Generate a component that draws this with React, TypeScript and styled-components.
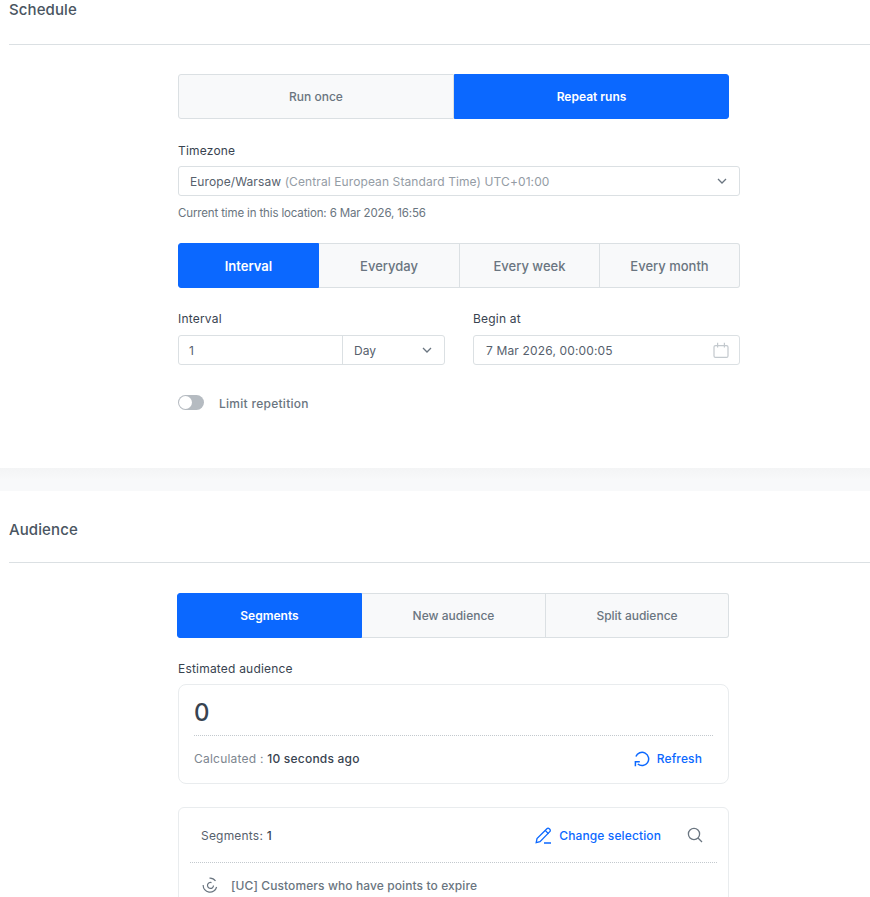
import styled, { createGlobalStyle } from 'styled-components';

const GlobalStyle = createGlobalStyle`
  html, body {
    margin: 0;
    background: #fff;
    overflow: hidden;
  }
  * {
    box-sizing: border-box;
  }
  body {
    font-family: Inter, "Liberation Sans", sans-serif;
    color: #384350;
  }
`;

const Page = styled.div`
  width: 870px;
  height: 897px;
  overflow: hidden;
`;

const Section = styled.section<{ $height: number }>`
  height: ${({ $height }) => $height}px;
  padding-left: 9px;
`;

const SectionTitle = styled.h2<{ $height: number }>`
  margin: 0;
  height: ${({ $height }) => $height}px;
  border-bottom: 1px solid #dbe0e3;
  font-size: 15px;
  font-weight: 500;
  color: #4a5561;
  letter-spacing: 0.1px;
`;

const TitleText = styled.span<{ $top: number }>`
  display: block;
  padding-top: ${({ $top }) => $top}px;
  line-height: 20px;
`;

const Band = styled.div`
  height: 23px;
  background: linear-gradient(#f3f4f5, #f8f9fa 50%);
`;

const Body = styled.div<{ $top: number; $left: number }>`
  padding-top: ${({ $top }) => $top}px;
  padding-left: ${({ $left }) => $left}px;
`;

const Tabs = styled.div<{ $columns: string; $top?: number }>`
  display: grid;
  grid-template-columns: ${({ $columns }) => $columns};
  height: 45px;
  margin-top: ${({ $top }) => $top ?? 0}px;
`;

const Tab = styled.button<{ $active?: boolean }>`
  min-width: 0;
  padding: 0;
  font: ${({ $active }) => ($active ? 600 : 500)} 12px Inter, "Liberation Sans", sans-serif;
  cursor: pointer;
  border: 1px solid ${({ $active }) => ($active ? '#0b68ff' : '#dbe0e3')};
  border-left-width: ${({ $active }) => ($active ? 1 : 0)}px;
  background: ${({ $active }) => ($active ? '#0b68ff' : '#f8f9fa')};
  color: ${({ $active }) => ($active ? '#fff' : '#6a7580')};

  &:first-child {
    border-left-width: 1px;
    border-radius: 3px 0 0 3px;
  }
  &:last-child {
    border-radius: 0 3px 3px 0;
  }
`;

const LargeTab = styled(Tab)`
  font-size: 13px;
`;

const Label = styled.div<{ $top: number }>`
  margin-top: ${({ $top }) => $top}px;
  height: 16px;
  font-size: 12px;
  line-height: 16px;
  color: #384350;
  letter-spacing: 0.2px;
`;

const Field = styled.div`
  display: flex;
  align-items: center;
  height: 30px;
  border: 1px solid #dbe0e3;
  border-radius: 3px;
  font-size: 12px;
  color: #57616d;
  background: #fff;
`;

const TimezoneField = styled(Field)`
  width: 562px;
  margin-top: 7px;
  padding: 0 12px 0 11px;
  justify-content: space-between;
  letter-spacing: 0.1px;
`;

const Muted = styled.span`
  color: #949ca5;
`;

const Hint = styled.div`
  margin-top: 9px;
  height: 16px;
  font-size: 11.5px;
  line-height: 16px;
  color: #6a7580;
  letter-spacing: -0.14px;
`;

const FieldRow = styled.div`
  display: grid;
  grid-template-columns: 267px 267px;
  column-gap: 28px;
  margin-top: 23px;
`;

const NumberPart = styled.div`
  flex: 1;
  height: 100%;
  display: flex;
  align-items: center;
  padding-left: 10px;
  border-right: 1px solid #dbe0e3;
`;

const UnitPart = styled.div`
  width: 101px;
  display: flex;
  align-items: center;
  justify-content: space-between;
  padding: 0 12px 0 11px;
`;

const FieldSlot = styled.div`
  margin-top: 8px;
`;

const DateField = styled(Field)`
  justify-content: space-between;
  padding: 0 10px 0 12px;
  letter-spacing: 0.15px;
`;

const SwitchRow = styled.div`
  display: flex;
  align-items: center;
  gap: 15px;
  margin-top: 30px;
  font-size: 12px;
  font-weight: 500;
  color: #6a7580;
  letter-spacing: 0.28px;
`;

const SwitchTrack = styled.div`
  position: relative;
  width: 26px;
  height: 15px;
  margin-bottom: 2px;
  border-radius: 8px;
  background: #b5bbc1;
`;

const SwitchKnob = styled.div`
  position: absolute;
  left: 1px;
  top: 1px;
  width: 13px;
  height: 13px;
  border-radius: 50%;
  background: #fff;
`;

const Card = styled.div`
  width: 551px;
  border: 1px solid #e9ecee;
  border-radius: 8px;
  background: #fff;
`;

const AudienceCard = styled(Card)`
  height: 100px;
  margin-top: 7px;
  padding: 0 15px;
`;

const BigNumber = styled.div`
  height: 51px;
  padding-top: 13px;
  border-bottom: 1px dotted #c3c9ce;
  font-size: 24px;
  font-weight: 500;
  line-height: 29px;
  color: #384350;
`;

const CalcRow = styled.div`
  display: flex;
  align-items: center;
  justify-content: space-between;
  height: 45px;
  padding-right: 11px;
  font-size: 12px;
  color: #7d8690;
  letter-spacing: 0.22px;
`;

const Strong = styled.span`
  color: #384350;
  font-weight: 500;
`;

const LinkAction = styled.span`
  display: inline-flex;
  align-items: center;
  gap: 7px;
  font-size: 12px;
  font-weight: 500;
  color: #0b68ff;
  letter-spacing: 0.12px;
`;

const SegmentsCard = styled(Card)`
  height: 130px;
  margin-top: 23px;
  padding: 0 11px;
  border-radius: 6px;
`;

const SegmentsHeader = styled.div`
  display: flex;
  align-items: center;
  justify-content: space-between;
  height: 55px;
  padding: 0 14px 0 11px;
  border-bottom: 1px dotted #c3c9ce;
  font-size: 12px;
  color: #57616d;
  letter-spacing: 0.2px;
`;

const SegmentActions = styled.div`
  display: flex;
  align-items: center;
  gap: 26px;
`;

const SegmentRow = styled.div`
  display: flex;
  align-items: center;
  gap: 13px;
  height: 44px;
  padding-left: 12px;
  font-size: 12px;
  font-weight: 500;
  color: #6a7580;
  letter-spacing: 0.1px;
`;

const Chevron = () => (
  <svg width="10" height="6" viewBox="0 0 10 6" fill="none" stroke="#6a7580" strokeWidth="1.3">
    <path d="M1 1l4 4 4-4" />
  </svg>
);

const CalendarIcon = () => (
  <svg width="16" height="16" viewBox="0 0 16 16" fill="none" stroke="#c3c9ce" strokeWidth="1.2">
    <rect x="1" y="3.6" width="14" height="11.8" rx="1.5" />
    <path d="M4.6 0.8v4.6M11.4 0.8v4.6" />
  </svg>
);

const RefreshIcon = () => (
  <svg width="16" height="16" viewBox="0 0 16 16" fill="none" stroke="#0b68ff" strokeWidth="1.5">
    <path d="M1.9 5.6A6.6 6.6 0 1 1 3.8 13" />
    <path d="M1.4 15.2v-4.4h4.4" />
  </svg>
);

const PencilIcon = () => (
  <svg width="17" height="17" viewBox="0 0 17 17" fill="none" stroke="#0b68ff" strokeWidth="1.3">
    <path d="M1.2 15.6l.8-4L11.9 1.7a1.6 1.6 0 0 1 2.3 0l.6.6a1.6 1.6 0 0 1 0 2.3L5 14.6z" />
    <path d="M10.2 3.4l3.3 3.3M9 16h7" />
  </svg>
);

const SearchIcon = () => (
  <svg width="16" height="16" viewBox="0 0 16 16" fill="none" stroke="#6a7580" strokeWidth="1.3">
    <circle cx="7" cy="7" r="5.6" />
    <path d="M11 11l4 4" />
  </svg>
);

const SegmentIcon = () => (
  <svg width="16" height="16" viewBox="0 0 16 16" fill="none" stroke="#6a7580" strokeWidth="1.2">
    <path d="M1.2 8A6.8 6.8 0 0 0 14.6 10" />
    <path d="M7.5 1.2A6.8 6.8 0 0 1 13.5 4" />
    <path d="M9.5 5.6A3 3 0 1 0 11.5 8.5" />
  </svg>
);

const App = () => (
  <Page>
    <GlobalStyle />
    <Section $height={468}>
      <SectionTitle $height={45}>
        <TitleText $top={0}>Schedule</TitleText>
      </SectionTitle>
      <Body $top={29} $left={169}>
        <Tabs $columns="276px 275px">
          <Tab>Run once</Tab>
          <Tab $active>Repeat runs</Tab>
        </Tabs>
        <Label $top={24}>Timezone</Label>
        <TimezoneField>
          <span>
            Europe/Warsaw <Muted>(Central European Standard Time) UTC+01:00</Muted>
          </span>
          <Chevron />
        </TimezoneField>
        <Hint>Current time in this location: 6 Mar 2026, 16:56</Hint>
        <Tabs $columns="141px 141px 140px 140px" $top={22}>
          <LargeTab $active>Interval</LargeTab>
          <LargeTab>Everyday</LargeTab>
          <LargeTab>Every week</LargeTab>
          <LargeTab>Every month</LargeTab>
        </Tabs>
        <FieldRow>
          <div>
            <Label $top={0}>Interval</Label>
            <FieldSlot>
              <Field>
                <NumberPart>1</NumberPart>
                <UnitPart>
                  Day
                  <Chevron />
                </UnitPart>
              </Field>
            </FieldSlot>
          </div>
          <div>
            <Label $top={0}>Begin at</Label>
            <FieldSlot>
              <DateField>
                7 Mar 2026, 00:00:05
                <CalendarIcon />
              </DateField>
            </FieldSlot>
          </div>
        </FieldRow>
        <SwitchRow>
          <SwitchTrack>
            <SwitchKnob />
          </SwitchTrack>
          Limit repetition
        </SwitchRow>
      </Body>
    </Section>
    <Band />
    <Section $height={406}>
      <SectionTitle $height={72}>
        <TitleText $top={29}>Audience</TitleText>
      </SectionTitle>
      <Body $top={30} $left={168}>
        <Tabs $columns="185px 184px 183px">
          <Tab $active>Segments</Tab>
          <Tab>New audience</Tab>
          <Tab>Split audience</Tab>
        </Tabs>
      </Body>
      <Body $top={0} $left={169}>
        <Label $top={23}>Estimated audience</Label>
        <AudienceCard>
          <BigNumber>0</BigNumber>
          <CalcRow>
            <span>
              Calculated : <Strong>10 seconds ago</Strong>
            </span>
            <LinkAction>
              <RefreshIcon />
              Refresh
            </LinkAction>
          </CalcRow>
        </AudienceCard>
        <SegmentsCard>
          <SegmentsHeader>
            <span>
              Segments: <Strong>1</Strong>
            </span>
            <SegmentActions>
              <LinkAction>
                <PencilIcon />
                Change selection
              </LinkAction>
              <SearchIcon />
            </SegmentActions>
          </SegmentsHeader>
          <SegmentRow>
            <SegmentIcon />
            [UC] Customers who have points to expire
          </SegmentRow>
        </SegmentsCard>
      </Body>
    </Section>
  </Page>
);

export default App;
